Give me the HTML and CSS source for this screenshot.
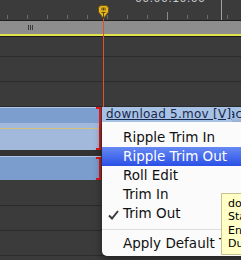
FILE: index.html
```html
<!DOCTYPE html>
<html lang="en">
<head>
    <meta charset="UTF-8">
    <meta name="viewport" content="width=device-width, initial-scale=1.0">
    <title>Timeline Trim Menu</title>
    <link rel="stylesheet" href="styles.css">
</head>
<body>
    <div class="timeline">
        <div class="ruler">
            <span class="timecode">00:00:10:00</span>
        </div>
        <div class="workbar"><span class="grip"></span></div>
        <div class="work-line"></div>

        <div class="track"></div>
        <div class="track track-tall"></div>
        <div class="track track-tall"></div>

        <!-- video track with edit point selected -->
        <div class="clip-row clip-row-a">
            <div class="clip clip-a">
                <div class="clip-head"></div>
                <div class="clip-body"><span class="rubber"></span></div>
            </div>
            <div class="clip-next">
                <div class="clip-title">
                    <span class="clip-name">download 5.mov [V]</span>
                    <span class="clip-param">Opacity:</span>
                </div>
            </div>
        </div>
        <div class="track-gap"></div>
        <div class="clip-row clip-row-b">
            <div class="clip clip-b"></div>
            <div class="clip-next"></div>
        </div>

        <div class="track track-low"></div>
        <div class="track track-tall"></div>
        <div class="track track-tall"></div>
    </div>

    <div class="playhead">
        <svg width="13" height="14" viewBox="0 0 13 14">
            <path d="M1.5 3.5 Q1.5 0.5 4.5 0.5 H8.5 Q11.5 0.5 11.5 3.5 V7 L6.5 13.5 L1.5 7 Z" fill="#e8b61e" stroke="#6a5212" stroke-width="1"/>
            <path d="M5 2.5 V5.5 M6.5 2.5 V5.5 M8 2.5 V5.5 M4.5 7.5 H8.5 M6.5 7.5 V13" stroke="#4a3a0a" stroke-width="0.9" fill="none"/>
        </svg>
        <div class="playhead-line"></div>
    </div>

    <div class="menu">
        <div class="menu-item">Ripple Trim In</div>
        <div class="menu-item active">Ripple Trim Out</div>
        <div class="menu-item">Roll Edit</div>
        <div class="menu-item">Trim In</div>
        <div class="menu-item">
            <svg class="check" width="11" height="10" viewBox="0 0 11 10">
                <path d="M1 5.5 L4 8.5 L10 1" stroke="#3a3a3a" stroke-width="2" fill="none"/>
            </svg>
            Trim Out
        </div>
        <div class="menu-sep"></div>
        <div class="menu-item">Apply Default Trim Type</div>
    </div>

    <div class="tooltip">
        <div>download 5.mov</div>
        <div>Start: 00:00:07:16</div>
        <div>End: 00:00:10:00</div>
        <div>Duration: 00:00:02:14</div>
    </div>
</body>
</html>
```

FILE: styles.css
```css
body {
    margin: 0;
    width: 241px;
    height: 260px;
    overflow: hidden;
    position: relative;
    background-color: #3b3b3b;
    font-family: "DejaVu Sans", Verdana, sans-serif;
}

.ruler {
    height: 20px;
    box-sizing: border-box;
    padding-left: 135px;
    overflow: hidden;
    background:
        linear-gradient(#a2a2a2, #a2a2a2) 221px 0 / 1px 20px no-repeat,
        linear-gradient(#8a8a8a, #8a8a8a) 167px 12px / 1px 8px no-repeat,
        linear-gradient(to right, #6c6c6c 1px, transparent 1px) 7px 15px / 20px 4px repeat-x,
        #3b3b3b;
}

.timecode {
    display: block;
    margin-top: -7px;
    font-size: 11px;
    line-height: 12px;
    letter-spacing: 0.3px;
    color: #cfcfcf;
}

.workbar {
    height: 13px;
    border-top: 1px solid #1f1f1f;
    background-color: #8d8d8d;
    padding-left: 28px;
}

.grip {
    display: block;
    width: 5px;
    height: 5px;
    margin-top: 4px;
    background: linear-gradient(to right, #3a3a3a 1px, transparent 1px) 0 0 / 2px 5px repeat-x;
}

.work-line {
    height: 2px;
    background-color: #e2e24c;
    border-bottom: 1px solid #1c1c1c;
}

.track {
    height: 19px;
    border-bottom: 1px solid #2b2b2b;
}

.track-tall {
    height: 24px;
}

.track-low {
    height: 25px;
}

.clip-row {
    display: flex;
}

.clip-row-a {
    height: 43px;
}

.clip-row-b {
    height: 24px;
}

.clip {
    flex-shrink: 0;
    width: 101px;
    position: relative;
}

/* edit point bracket */
.clip::after {
    content: "";
    position: absolute;
    right: 0;
    top: 0;
    bottom: 0;
    width: 3px;
    border: 2px solid #e01414;
    border-left: none;
}

.clip-a {
    display: flex;
    flex-direction: column;
}

.clip-head {
    height: 15px;
    border-top: 1px solid #b0c6e6;
    background-color: #7b9ecf;
}

.clip-body {
    flex: 1;
    padding-top: 5px;
    background-color: #a3b9dc;
}

.rubber {
    display: block;
    height: 1px;
    background-color: #d4c07a;
}

.clip-b {
    box-sizing: border-box;
    border-top: 1px solid #afc5e5;
    background-color: #7a9dce;
}

.clip-next {
    flex: 1;
    min-width: 0;
    margin-left: 1px;
    background-color: #7a9dce;
}

.clip-title {
    height: 15px;
    display: flex;
    overflow: hidden;
    white-space: nowrap;
    background-color: #a8c2e6;
    font-size: 12px;
    line-height: 15px;
    letter-spacing: 0.25px;
    color: #18284a;
}

.clip-name {
    flex-shrink: 0;
    position: relative;
    z-index: 1;
    padding: 0 1px 0 4px;
    background-color: #a8c2e6;
    text-decoration: underline;
}

/* parameter name, partly hidden behind the clip name */
.clip-param {
    flex-shrink: 0;
    margin-left: -22px;
}

.track-gap {
    height: 6px;
    background-color: #333;
}

.playhead {
    position: absolute;
    left: 97px;
    top: 5px;
    width: 13px;
    height: 102px;
    display: flex;
    flex-direction: column;
    align-items: center;
}

.playhead svg {
    display: block;
    flex-shrink: 0;
}

.playhead-line {
    flex: 1;
    width: 1px;
    background-color: #e0502a;
}

.menu {
    position: absolute;
    left: 102px;
    top: 122px;
    bottom: 4px;
    width: 170px;
    box-sizing: border-box;
    padding: 6px 0 3px;
    background-color: #fbfbfb;
    border-radius: 0 0 5px 5px;
    box-shadow: 0 3px 8px rgba(0, 0, 0, 0.45);
}

.menu-item {
    position: relative;
    height: 19px;
    line-height: 19px;
    padding-left: 21px;
    font-size: 13.5px;
    color: #111;
    white-space: nowrap;
}

.menu-item.active {
    background: linear-gradient(#6689f3, #2a50e6);
    color: #fff;
}

.check {
    position: absolute;
    left: 6px;
    top: 6px;
}

.menu-sep {
    height: 1px;
    margin: 6px 0 4px;
    background-color: #dedede;
}

.tooltip {
    position: absolute;
    left: 221px;
    top: 193px;
    width: 60px;
    height: 62px;
    box-sizing: border-box;
    padding: 3px 0 0 6px;
    overflow: hidden;
    white-space: nowrap;
    background-color: #ffffc6;
    border: 1px solid #c4c48e;
    font-size: 11px;
    line-height: 13.3px;
    color: #000;
}
```
